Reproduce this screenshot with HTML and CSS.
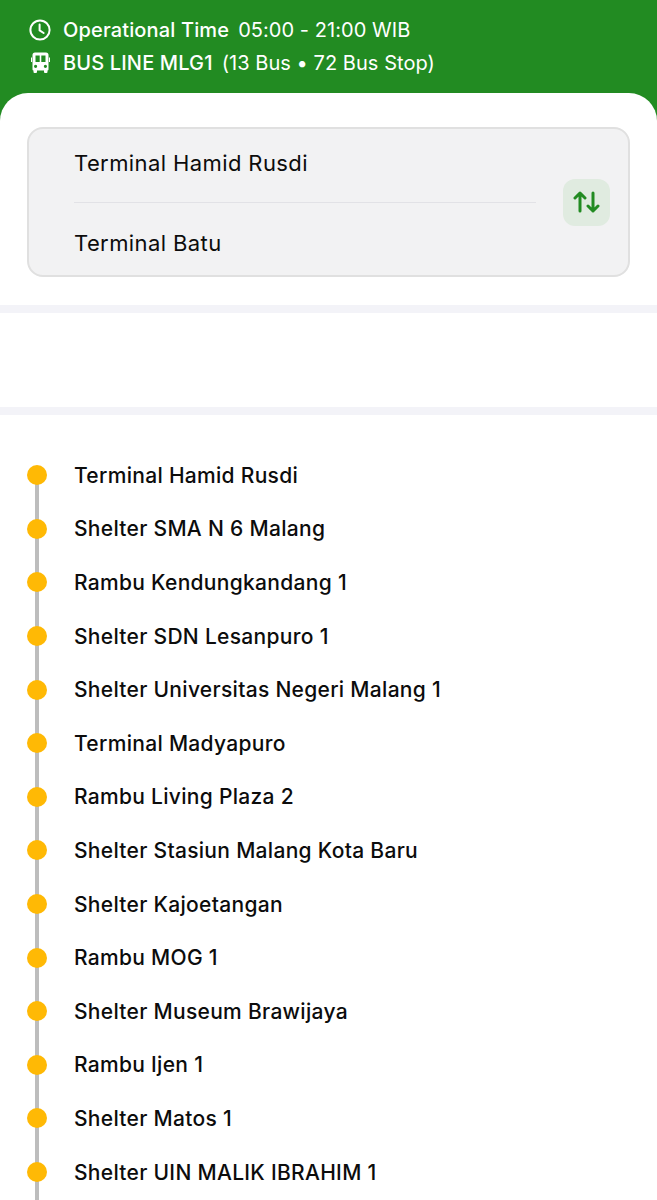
FILE: index.html
```html
<!DOCTYPE html>
<html lang="id">
<head>
    <meta charset="UTF-8">
    <meta name="viewport" content="width=device-width, initial-scale=1.0">
    <title>BUS LINE MLG1</title>
    <link rel="stylesheet" href="styles.css">
</head>
<body>
    <div class="app">
        <div class="info">
            <div class="info-row">
                <svg class="info-icon" viewBox="0 0 22 22" fill="none" stroke="#fff" stroke-width="2" stroke-linecap="round" stroke-linejoin="round">
                    <circle cx="11" cy="11" r="9.6"/>
                    <path d="M10.6 5.6v5.8l4 2.6"/>
                </svg>
                <span class="info-title">Operational Time</span>
                <span class="info-text">05:00 - 21:00 WIB</span>
            </div>
            <div class="info-row">
                <svg class="info-icon" viewBox="0 0 22 22" fill="#fff" fill-rule="evenodd">
                    <path d="M6 0.500h11A2.500 2.500 0 0 1 19.500 3v14.500a1 1 0 0 1-1 1V20a1 1 0 0 1-1 1H16a1 1 0 0 1-1-1v-1.500H8V20a1 1 0 0 1-1 1H5.500a1 1 0 0 1-1-1v-1.500a1 1 0 0 1-1-1V3A2.500 2.500 0 0 1 6 0.500zM6.500 3.500V10h4.200V3.500zM12.300 3.500V10h4.200V3.500zM6.600 12.700a1.600 1.600 0 1 0 0 3.200 1.600 1.600 0 0 0 0-3.200zM16.400 12.700a1.600 1.600 0 1 0 0 3.200 1.600 1.600 0 0 0 0-3.200z"/>
                    <path d="M2 5.500h1v4.500H2zM20 5.500h1v4.500h-1z"/>
                </svg>
                <span class="info-title">BUS LINE MLG1</span>
                <span class="info-text">(13 Bus • 72 Bus Stop)</span>
            </div>
        </div>

        <div class="sheet">
            <div class="route-section">
                <div class="route-box">
                    <div class="route-names">
                        <div class="route-name route-from">Terminal Hamid Rusdi</div>
                        <div class="route-name route-to">Terminal Batu</div>
                    </div>
                    <div class="swap-button">
                        <svg viewBox="0 0 27 24" width="27" height="24" fill="none" stroke="#228b22" stroke-width="3" stroke-linecap="round" stroke-linejoin="round">
                            <path d="M7 21V3M2 8l5-5 5 5"/>
                            <path d="M20 3v18M15 16l5 5 5-5"/>
                        </svg>
                    </div>
                </div>
            </div>

            <div class="empty-section"></div>

            <div class="stops">
                <div class="stop">Terminal Hamid Rusdi</div>
                <div class="stop">Shelter SMA N 6 Malang</div>
                <div class="stop">Rambu Kendungkandang 1</div>
                <div class="stop">Shelter SDN Lesanpuro 1</div>
                <div class="stop">Shelter Universitas Negeri Malang 1</div>
                <div class="stop">Terminal Madyapuro</div>
                <div class="stop">Rambu Living Plaza 2</div>
                <div class="stop">Shelter Stasiun Malang Kota Baru</div>
                <div class="stop">Shelter Kajoetangan</div>
                <div class="stop">Rambu MOG 1</div>
                <div class="stop">Shelter Museum Brawijaya</div>
                <div class="stop">Rambu Ijen 1</div>
                <div class="stop">Shelter Matos 1</div>
                <div class="stop">Shelter UIN MALIK IBRAHIM 1</div>
            </div>
        </div>
    </div>
</body>
</html>
```

FILE: styles.css
```css
body {
    margin: 0;
    font-family: Inter, "Liberation Sans", sans-serif;
    background-color: white;
}
.app {
    height: 1200px;
    overflow: hidden;
    background-color: #228b22;
}
.info {
    height: 93px;
    box-sizing: border-box;
    padding: 13px 0 0 29px;
    color: white;
}
.info-row {
    display: flex;
    align-items: center;
    height: 33px;
    font-size: 20px;
}
.info-icon {
    width: 22px;
    height: 22px;
    margin-right: 12px;
    flex-shrink: 0;
}
.info-title {
    font-weight: 500;
    letter-spacing: 0.15px;
    margin-right: 9px;
}
.info-text {
    font-weight: 400;
    letter-spacing: 0.05px;
}
.sheet {
    height: 1107px;
    background-color: white;
    border-radius: 28px 28px 0 0;
}
.route-section {
    padding: 34px 27px 28px;
    border-bottom: 8px solid #f3f3f8;
}
.route-box {
    display: flex;
    align-items: center;
    height: 150px;
    box-sizing: border-box;
    padding: 0 18px 0 45px;
    background-color: #f2f2f3;
    border: 2px solid #e0e0e0;
    border-radius: 16px;
}
.route-names {
    flex-grow: 1;
    margin-right: 27px;
}
.route-name {
    display: flex;
    align-items: center;
    height: 73px;
    box-sizing: border-box;
    font-size: 22px;
    letter-spacing: 0.4px;
    color: #0c0c0c;
}
.route-from {
    padding-bottom: 5px;
}
.route-to {
    padding-top: 8px;
    border-top: 1px solid #e2e2e6;
}
.swap-button {
    display: flex;
    align-items: center;
    justify-content: center;
    width: 47px;
    height: 47px;
    background-color: #e0ebe0;
    border-radius: 12px;
}
.empty-section {
    height: 94px;
    border-bottom: 8px solid #f3f3f8;
}
.stops {
    padding: 33.5px 0 0 74px;
}
.stop {
    position: relative;
    display: flex;
    align-items: center;
    height: 53.6px;
    font-size: 21px;
    letter-spacing: 0.3px;
    font-weight: 450;
    color: #0c0c0c;
}
.stop::before {
    content: "";
    position: absolute;
    left: -39px;
    top: 50%;
    width: 4px;
    height: 100%;
    background-color: #bdbdbd;
}
.stop::after {
    content: "";
    position: absolute;
    left: -47px;
    top: 50%;
    width: 20px;
    height: 20px;
    margin-top: -10px;
    background-color: #ffb905;
    border-radius: 50%;
}
```
